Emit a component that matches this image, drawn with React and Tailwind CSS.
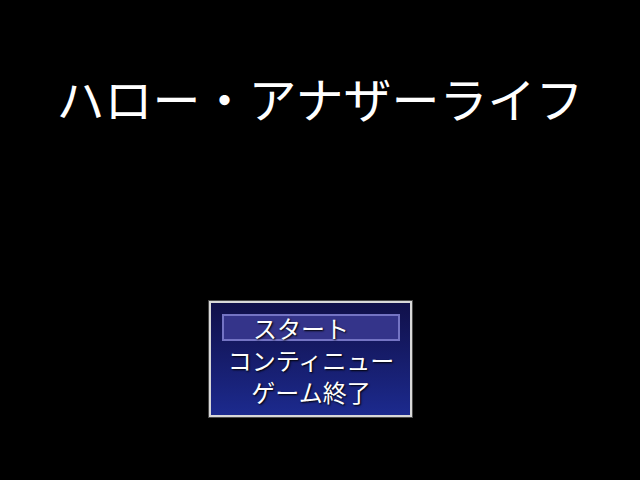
import React from 'react';

const commands = ['スタート', 'コンティニュー', 'ゲーム終了'];

const App = () => {
  const selected = 0;

  return (
    <div className="w-[640px] h-[480px] bg-black flex flex-col items-start overflow-hidden font-['Noto_Sans_CJK_JP','Noto_Sans',sans-serif] text-white">
      {/* タイトル */}
      <h1 className="self-stretch mt-[73px] h-[48px] text-center text-[48px] leading-[48px] font-normal">
        ハロー・アナザーライフ
      </h1>

      {/* コマンドウィンドウ */}
      <div className="ml-[208px] mt-[179px] w-[205px] border border-[#4a4a4a]">
        <div className="border-2 border-[#d8d8d8] bg-linear-to-b from-[#10104a] to-[#1c2a8e] pl-[11px] pr-[10px] pt-[11px] pb-[10px] flex flex-col gap-[5px]">
          {commands.map((label, i) => (
            <div
              key={label}
              className={`h-[27px] flex items-center justify-center text-[24px] leading-none [text-shadow:1px_1px_2px_#000] ${
                i === selected ? 'border-2 border-[#7474c4] bg-[#34348a] pr-[20px]' : ''
              }`}
            >
              {label}
            </div>
          ))}
        </div>
      </div>
    </div>
  );
};

export default App;
